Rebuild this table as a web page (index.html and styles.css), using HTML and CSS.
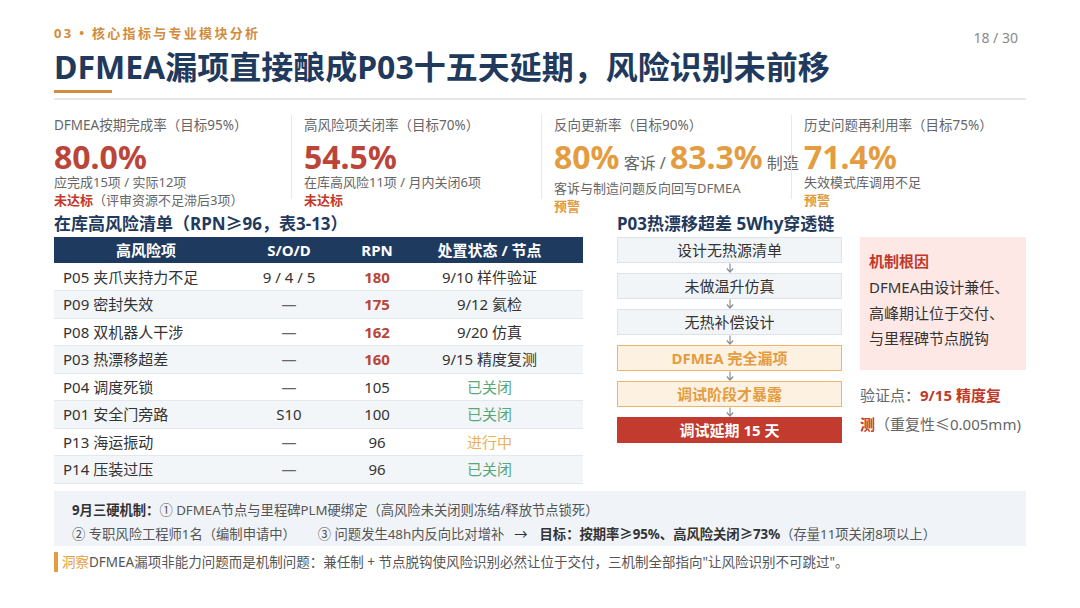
FILE: index.html
```html
<!DOCTYPE html>
<html lang="zh-CN">
<head>
<meta charset="utf-8">
<title>DFMEA</title>
<link rel="stylesheet" href="styles.css">
</head>
<body>
<div class="slide">
  <header class="top">
    <div class="kicker-row">
      <span class="kicker">03 • 核心指标与专业模块分析</span>
      <span class="pagenum">18 / 30</span>
    </div>
    <h1 class="title">DFMEA漏项直接酿成P03十五天延期，风险识别未前移</h1>
    <div class="accent"></div>
    <div class="rule"></div>
  </header>

  <section class="kpis">
    <div class="kpi">
      <div class="kpi-label">DFMEA按期完成率（目标95%）</div>
      <div class="kpi-num red">80.0%</div>
      <div class="kpi-sub">应完成15项 / 实际12项</div>
      <div class="kpi-status red-t">未达标<span class="note">（评审资源不足滞后3项）</span></div>
    </div>
    <div class="kpi">
      <div class="kpi-label">高风险项关闭率（目标70%）</div>
      <div class="kpi-num red">54.5%</div>
      <div class="kpi-sub">在库高风险11项 / 月内关闭6项</div>
      <div class="kpi-status red-t">未达标</div>
    </div>
    <div class="kpi">
      <div class="kpi-label">反向更新率（目标90%）</div>
      <div class="kpi-num orange">80%<span class="unit"> 客诉 / </span>83.3%<span class="unit"> 制造</span></div>
      <div class="kpi-sub">客诉与制造问题反向回写DFMEA</div>
      <div class="kpi-status orange-t">预警</div>
    </div>
    <div class="kpi">
      <div class="kpi-label">历史问题再利用率（目标75%）</div>
      <div class="kpi-num orange">71.4%</div>
      <div class="kpi-sub">失效模式库调用不足</div>
      <div class="kpi-status orange-t">预警</div>
    </div>
  </section>

  <div class="main">
    <section class="left">
      <h2 class="sec">在库高风险清单（RPN≥96，表3-13）</h2>
      <table class="risk">
        <colgroup>
          <col class="c1"><col class="c2"><col class="c3"><col class="c4">
        </colgroup>
        <thead>
          <tr><th>高风险项</th><th>S/O/D</th><th>RPN</th><th class="st">处置状态 / 节点</th></tr>
        </thead>
        <tbody>
          <tr><td class="name">P05 夹爪夹持力不足</td><td>9 / 4 / 5</td><td class="rpn hot">180</td><td class="st">9/10 样件验证</td></tr>
          <tr><td class="name">P09 密封失效</td><td class="dash">—</td><td class="rpn hot">175</td><td class="st">9/12 氦检</td></tr>
          <tr><td class="name">P08 双机器人干涉</td><td class="dash">—</td><td class="rpn hot">162</td><td class="st">9/20 仿真</td></tr>
          <tr><td class="name">P03 热漂移超差</td><td class="dash">—</td><td class="rpn hot">160</td><td class="st">9/15 精度复测</td></tr>
          <tr><td class="name">P04 调度死锁</td><td class="dash">—</td><td class="rpn">105</td><td class="st closed">已关闭</td></tr>
          <tr><td class="name">P01 安全门旁路</td><td>S10</td><td class="rpn">100</td><td class="st closed">已关闭</td></tr>
          <tr><td class="name">P13 海运振动</td><td class="dash">—</td><td class="rpn">96</td><td class="st doing">进行中</td></tr>
          <tr><td class="name">P14 压装过压</td><td class="dash">—</td><td class="rpn">96</td><td class="st closed">已关闭</td></tr>
        </tbody>
      </table>
    </section>

    <section class="right">
      <h2 class="sec">P03热漂移超差 5Why穿透链</h2>
      <div class="why">
        <div class="chain">
          <div class="step">设计无热源清单</div>
          <svg class="arrow" viewBox="0 0 10 10" width="10" height="10"><path d="M5 0.5 V8.5 M1.8 5.5 L5 9 L8.2 5.5" fill="none" stroke="#8a9099" stroke-width="1.2"/></svg>
          <div class="step">未做温升仿真</div>
          <svg class="arrow" viewBox="0 0 10 10" width="10" height="10"><path d="M5 0.5 V8.5 M1.8 5.5 L5 9 L8.2 5.5" fill="none" stroke="#8a9099" stroke-width="1.2"/></svg>
          <div class="step">无热补偿设计</div>
          <svg class="arrow" viewBox="0 0 10 10" width="10" height="10"><path d="M5 0.5 V8.5 M1.8 5.5 L5 9 L8.2 5.5" fill="none" stroke="#8a9099" stroke-width="1.2"/></svg>
          <div class="step warn">DFMEA 完全漏项</div>
          <svg class="arrow" viewBox="0 0 10 10" width="10" height="10"><path d="M5 0.5 V8.5 M1.8 5.5 L5 9 L8.2 5.5" fill="none" stroke="#8a9099" stroke-width="1.2"/></svg>
          <div class="step warn">调试阶段才暴露</div>
          <svg class="arrow" viewBox="0 0 10 10" width="10" height="10"><path d="M5 0.5 V8.5 M1.8 5.5 L5 9 L8.2 5.5" fill="none" stroke="#8a9099" stroke-width="1.2"/></svg>
          <div class="step fail">调试延期 15 天</div>
        </div>
        <div class="side">
          <div class="cause">
            <div class="cause-title">机制根因</div>
            <div class="cause-body">DFMEA由设计兼任、<br>高峰期让位于交付、<br>与里程碑节点脱钩</div>
          </div>
          <p class="verify">验证点：<b>9/15 精度复</b><br><b>测</b>（重复性≤0.005mm)</p>
        </div>
      </div>
    </section>
  </div>

  <div class="mech">
    <div class="mech-line"><b class="mech-head">9月三硬机制：</b>① DFMEA节点与里程碑PLM硬绑定（高风险未关闭则冻结/释放节点锁死）</div>
    <div class="mech-line">② 专职风险工程师1名（编制申请中）<span class="sp"></span>③ 问题发生48h内反向比对增补<span class="to">→</span><b class="mech-head">目标：按期率≥95%、高风险关闭≥73%</b>（存量11项关闭8项以上）</div>
  </div>

  <p class="insight"><span class="tag">洞察</span>DFMEA漏项非能力问题而是机制问题：兼任制 + 节点脱钩使风险识别必然让位于交付，三机制全部指向"让风险识别不可跳过"。</p>
</div>
</body>
</html>
```

FILE: styles.css
```css
* { box-sizing: border-box; }
html, body { margin: 0; padding: 0; background: #ffffff; }
body {
  font-family: "Noto Sans", "Noto Sans CJK SC", sans-serif;
  color: #333333;
}
.slide {
  width: 1080px;
  height: 608px;
  padding: 25px 54px 0 54px;
  overflow: hidden;
}

/* header */
.kicker-row {
  display: flex;
  justify-content: space-between;
  align-items: flex-start;
  height: 16px;
}
.kicker {
  font-size: 13px;
  line-height: 16px;
  font-weight: 700;
  letter-spacing: 2.3px;
  color: #d28c3d;
}
.pagenum {
  font-size: 14px;
  line-height: 16px;
  color: #8a8a8a;
  margin-top: 5px;
  margin-right: 8px;
}
.title {
  margin: 8px 0 0 0;
  font-size: 32px;
  line-height: 36px;
  font-weight: 700;
  color: #1f3a5c;
  letter-spacing: 0;
}
.accent {
  width: 58px;
  height: 3px;
  background: #d28c3d;
  margin-top: 5px;
}
.rule {
  height: 2px;
  background: #e4e6ea;
  margin-top: 5px;
}

/* KPIs */
.kpis {
  display: grid;
  grid-template-columns: 237px 250px 250px 235px;
  margin-top: 15px;
}
.kpi {
  padding-left: 12px;
  border-left: 1px solid #e6e8eb;
  white-space: nowrap;
  height: 84px;
  overflow: visible;
}
.kpi:first-child {
  padding-left: 0;
  border-left: none;
}
.kpi-label {
  font-size: 13.5px;
  line-height: 20px;
  color: #666666;
}
.kpi-num {
  font-size: 32px;
  line-height: 30px;
  font-weight: 700;
  margin-top: 7px;
}
.kpi-num .unit {
  font-size: 16px;
  font-weight: 400;
  color: #666666;
}
.red { color: #bb4538; }
.orange { color: #e49c40; }
.kpi-sub {
  font-size: 13px;
  line-height: 18px;
  color: #666666;
  margin-top: 1px;
}
.kpi-status {
  font-size: 13px;
  line-height: 18px;
  font-weight: 700;
}
.red-t { color: #c0392b; }
.orange-t { color: #e09a3e; }
.kpi-status .note {
  font-weight: 400;
  color: #666666;
}

/* main */
.main {
  display: flex;
  gap: 34px;
  margin-top: 14px;
}
.left { width: 529px; }
.right { width: 409px; }
.sec {
  margin: 0 0 2px 0;
  font-size: 17px;
  line-height: 22px;
  font-weight: 700;
  color: #1f3a5c;
  white-space: nowrap;
}

/* table */
.risk {
  width: 529px;
  border-collapse: collapse;
  table-layout: fixed;
  font-size: 15px;
}
.c1 { width: 184px; }
.c2 { width: 102px; }
.c3 { width: 74px; }
.c4 { width: 169px; }
.risk th {
  background: #1e3a5f;
  color: #ffffff;
  font-weight: 700;
  height: 26px;
  padding: 0;
  line-height: 20px;
  text-align: center;
}
.risk td {
  height: 27.5px;
  padding: 0;
  line-height: 20px;
  text-align: center;
  border-bottom: 1px solid #e3e8ee;
  color: #333333;
  white-space: nowrap;
}
.risk tbody tr:nth-child(even) td { background: #f3f6f9; }
.risk td.name { text-align: left; padding-left: 9px; }
.risk .st { padding-right: 18px; }
.risk td.dash { color: #666666; }
.risk td.rpn.hot { color: #b8453a; font-weight: 700; }
.risk td.closed { color: #55a878; }
.risk td.doing { color: #eab061; }

/* 5 why */
.why {
  display: flex;
  gap: 18px;
}
.chain {
  width: 225px;
  display: flex;
  flex-direction: column;
  align-items: center;
}
.step {
  width: 100%;
  height: 26px;
  line-height: 24px;
  text-align: center;
  font-size: 15px;
  color: #333333;
  background: #f2f5f8;
  border: 1px solid #dde3ea;
}
.step.warn {
  background: #fdf2e2;
  border-color: #ebb66c;
  color: #e49c40;
  font-weight: 700;
}
.step.fail {
  background: #c23b2e;
  border-color: #c23b2e;
  color: #ffffff;
  font-weight: 700;
}
.arrow {
  display: block;
  margin: 0;
}
.side {
  width: 166px;
}
.cause {
  background: #fde8e6;
  height: 133px;
  padding: 12px 0 0 9px;
  white-space: nowrap;
}
.cause-title {
  font-size: 15px;
  line-height: 24px;
  font-weight: 700;
  color: #c0392b;
}
.cause-body {
  font-size: 15px;
  line-height: 25.5px;
  color: #333333;
  margin-top: 2px;
}
.verify {
  margin: 11px 0 0 0;
  font-size: 15px;
  line-height: 29px;
  color: #666666;
  white-space: nowrap;
}
.verify b {
  color: #c0392b;
  font-weight: 700;
}

/* mechanism */
.mech {
  margin-top: 7px;
  background: #f0f4f8;
  height: 55px;
  padding: 7px 0 0 18px;
  font-size: 13.3px;
  color: #555555;
}
.mech-line {
  line-height: 24px;
  white-space: nowrap;
}
.mech-head {
  color: #333333;
  font-weight: 700;
}
.sp { display: inline-block; width: 22px; }
.to { display: inline-block; margin: 0 12px 0 10px; color: #333333; }

.insight {
  margin: 6px 0 0 0;
  font-size: 13.5px;
  line-height: 20px;
  color: #555555;
  border-left: 4px solid #e49c40;
  padding-left: 4px;
  white-space: nowrap;
}
.insight .tag { color: #e49c40; }
```
